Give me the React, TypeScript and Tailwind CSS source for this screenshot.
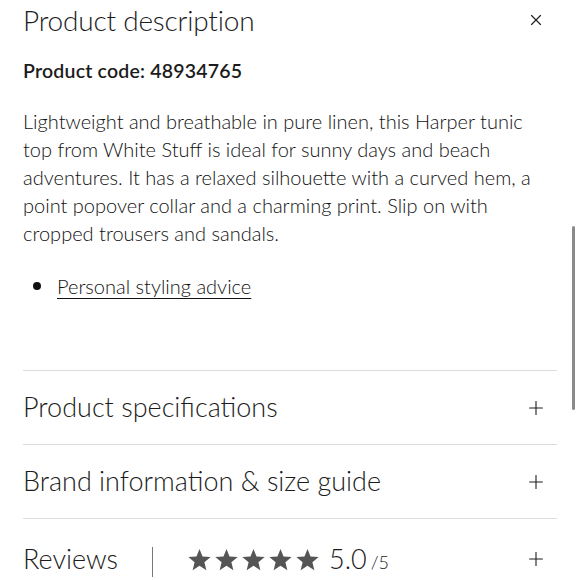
import { Plus, X } from 'lucide-react'

const sections = ['Product specifications', 'Brand information & size guide']

function Star() {
  return (
    <svg viewBox="0 0 24 24" className="w-[25px] h-[25px] fill-[#555]">
      <path d="M12 1.8l2.9 7.3 7.8.5-6 5 1.9 7.6L12 18l-6.6 4.2 1.9-7.6-6-5 7.8-.5z" />
    </svg>
  )
}

export default function App() {
  return (
    <div className="relative w-[580px] h-[580px] overflow-hidden bg-white text-[#1c1c1c] font-['Lato',sans-serif]">
      <div className="pl-[23px] pr-[23px]">
        <div className="flex items-center justify-between h-[40px]">
          <h2 className="text-[28px] font-light leading-none tracking-[-0.2px]">Product description</h2>
          <X className="w-[18px] h-[18px] mr-[12px]" strokeWidth={1.5} />
        </div>

        <p className="mt-[17px] text-[19.5px] font-semibold leading-[28px] tracking-[0.2px]">Product code: 48934765</p>

        <p className="mt-[22px] text-[20px] font-light leading-[28px] text-[#111] whitespace-nowrap">
          Lightweight and breathable in pure linen, this Harper tunic<br />
          top from White Stuff is ideal for sunny days and beach<br />
          adventures. It has a relaxed silhouette with a curved hem, a<br />
          point popover collar and a charming print. Slip on with<br />
          cropped trousers and sandals.
        </p>

        <ul className="mt-[25px] pl-[10px]">
          <li className="flex items-center gap-[16px] text-[20px] font-light leading-[28px] text-[#111]">
            <span className="w-[8px] h-[8px] rounded-full bg-[#111]" />
            <a href="#" className="underline underline-offset-[4px] decoration-[1px]">Personal styling advice</a>
          </li>
        </ul>

        <div className="mt-[70px] border-t border-[#dcdcdc]">
          {sections.map((s) => (
            <div key={s} className="flex items-center justify-between h-[74px] border-b border-[#dcdcdc]">
              <span className="text-[27px] font-light">{s}</span>
              <Plus className="w-[22px] h-[22px] mr-[10px]" strokeWidth={1.2} />
            </div>
          ))}
          <div className="flex items-center justify-between h-[80px]">
            <div className="flex items-center">
              <span className="text-[27px] font-light">Reviews</span>
              <span className="ml-[34px] w-px h-[30px] bg-[#777] mt-[6px]" />
              <div className="ml-[34px] flex items-center gap-[2px]">
                <Star />
                <Star />
                <Star />
                <Star />
                <Star />
              </div>
              <span className="ml-[9px] text-[27px] font-light">5.0</span>
              <span className="ml-[4px] text-[18px] font-light mt-[6px]">/5</span>
            </div>
            <Plus className="w-[22px] h-[22px] mr-[10px]" strokeWidth={1.2} />
          </div>
        </div>
      </div>

      {/* scroll thumb */}
      <div className="absolute right-[5px] top-[226px] w-[3px] h-[184px] rounded-full bg-[#8a8a8a]" />
    </div>
  )
}
